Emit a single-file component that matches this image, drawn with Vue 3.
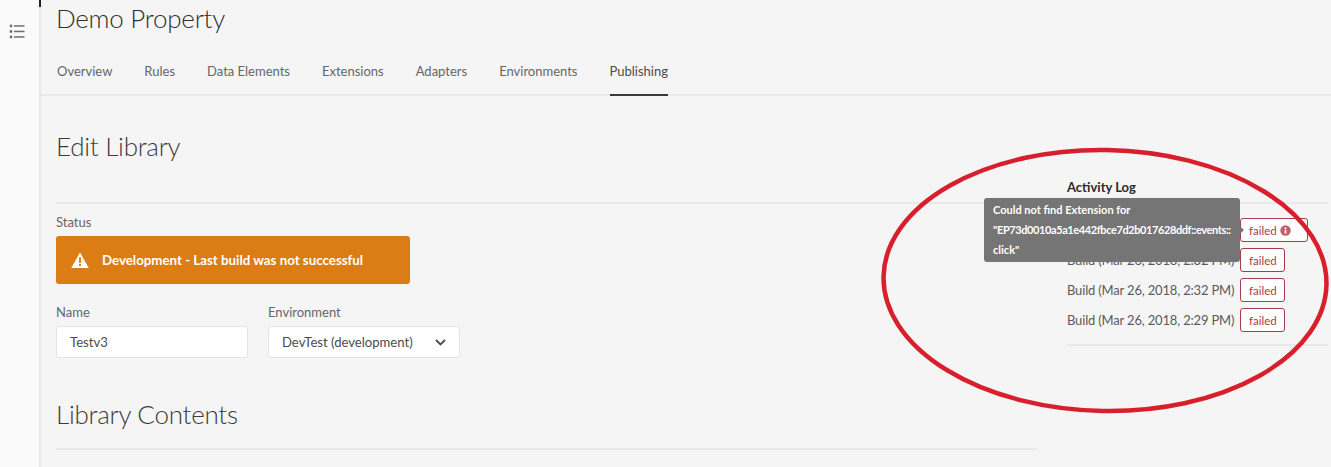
<script setup>
const tabs = ['Overview', 'Rules', 'Data Elements', 'Extensions', 'Adapters', 'Environments', 'Publishing']
const builds = [
  { label: 'Build (Mar 26, 2018, 2:32 PM)' },
  { label: 'Build (Mar 26, 2018, 2:32 PM)' },
  { label: 'Build (Mar 26, 2018, 2:32 PM)' },
  { label: 'Build (Mar 26, 2018, 2:29 PM)' },
]
</script>

<template>
  <div class="page">
    <aside class="rail">
      <svg class="rail-icon" width="16" height="15" viewBox="0 0 16 15">
        <circle cx="2" cy="2" r="1.4" />
        <circle cx="2" cy="7.5" r="1.4" />
        <circle cx="2" cy="13" r="1.4" />
        <rect x="5" y="1.2" width="10.5" height="1.5" />
        <rect x="5" y="6.7" width="10.5" height="1.5" />
        <rect x="5" y="12.2" width="10.5" height="1.5" />
      </svg>
    </aside>
    <main class="main">
      <span class="tick"></span>
      <h1 class="title">Demo Property</h1>
      <nav class="tabs">
        <a v-for="(t, i) in tabs" :key="t" class="tab" :class="{ active: i === tabs.length - 1 }">{{ t }}</a>
      </nav>
      <div class="body">
        <h2 class="heading">Edit Library</h2>
        <div class="columns">
          <section class="left">
            <div class="rule-space"></div>
            <label class="lbl status-lbl">Status</label>
            <div class="alert">
              <svg width="18" height="16" viewBox="0 0 18 16">
                <path d="M9 0.5 L17.8 16 H0.2 Z" fill="#fff" />
                <rect x="8" y="5.3" width="2" height="5.6" fill="#dc7c14" />
                <rect x="8" y="12" width="2" height="2" fill="#dc7c14" />
              </svg>
              <span>Development - Last build was not successful</span>
            </div>
            <div class="fields">
              <div class="field">
                <label class="lbl">Name</label>
                <div class="box">Testv3</div>
              </div>
              <div class="field">
                <label class="lbl">Environment</label>
                <div class="box select">
                  <span>DevTest (development)</span>
                  <svg width="11" height="7" viewBox="0 0 11 7"><path d="M1 1 L5.5 5.5 L10 1" fill="none" stroke="#4b4b4b" stroke-width="1.8" /></svg>
                </div>
              </div>
            </div>
            <h2 class="heading contents">Library Contents</h2>
          </section>
          <section class="right">
            <h3 class="log-title">Activity Log</h3>
            <ul class="log">
              <li v-for="(b, i) in builds" :key="i" class="log-row">
                <span class="log-label">{{ b.label }}</span>
                <span class="badge" :class="{ wide: i === 0 }">
                  failed
                  <svg v-if="i === 0" width="11" height="11" viewBox="0 0 11 11">
                    <circle cx="5.5" cy="5.5" r="5.2" fill="#c0606a" />
                    <rect x="4.7" y="4.7" width="1.6" height="3.8" fill="#fff" />
                    <rect x="4.7" y="2.4" width="1.6" height="1.6" fill="#fff" />
                  </svg>
                </span>
              </li>
            </ul>
            <div class="tooltip">
              <span class="tip-line">Could not find Extension for</span>
              <span class="tip-line tight">"EP73d0010a5a1e442fbce7d2b017628ddf::events::</span>
              <span class="tip-line">click"</span>
            </div>
          </section>
        </div>
      </div>
    </main>
    <svg class="ring" width="460" height="280" viewBox="0 0 460 280">
      <ellipse cx="230" cy="140.5" rx="221.5" ry="130.5" transform="rotate(1 230 140.5)" />
    </svg>
  </div>
</template>

<style>
html, body { margin: 0; background: #f5f5f5; }
</style>

<style scoped>
.page {
  position: relative;
  display: flex;
  width: 1331px;
  height: 467px;
  overflow: hidden;
  background: #f5f5f5;
  font-family: Lato, "Open Sans", sans-serif;
  color: #4b4b4b;
}
.rail {
  flex: none;
  width: 39px;
  height: 100%;
  background: #fafafa;
  border-right: 2px solid #e8e8e8;
  display: flex;
  justify-content: center;
  align-items: flex-start;
}
.rail-icon { margin-top: 24px; margin-right: 5px; fill: #6e6e6e; }
.main {
  position: relative;
  flex: 1;
  min-width: 0;
}
.tick {
  position: absolute;
  left: -2px;
  top: 0;
  width: 2px;
  height: 7px;
  background: #222;
}
.title {
  margin: 0;
  padding: 1px 0 0 15px;
  height: 39px;
  font-size: 26px;
  letter-spacing: -0.26px;
  line-height: 34px;
  font-weight: 300;
  color: #2f2f2f;
}
.tabs {
  display: flex;
  gap: 32px;
  height: 54px;
  padding-left: 16px;
  border-bottom: 2px solid #eaeaea;
}
.tab {
  height: 56px;
  box-sizing: border-box;
  padding-top: 22px;
  font-size: 13px;
  line-height: 18px;
  color: #666;
}
.tab.active {
  color: #4b4b4b;
  border-bottom: 2px solid #3a3a3a;
}
.body { padding: 32px 3px 0 15px; }
.heading {
  margin: 0;
  font-size: 26px;
  letter-spacing: -0.26px;
  line-height: 36px;
  font-weight: 300;
  color: #3a3a3a;
}
.columns {
  display: flex;
  gap: 30px;
  margin-top: 20px;
}
.left { width: 981px; flex: none; }
.rule-space { height: 18px; border-bottom: 2px solid #e8e8e8; }
.lbl {
  display: block;
  font-size: 13px;
  line-height: 18px;
  color: #666;
}
.status-lbl { margin-top: 9px; }
.alert {
  display: flex;
  align-items: center;
  gap: 13px;
  width: 354px;
  height: 48px;
  margin-top: 5px;
  box-sizing: border-box;
  padding-left: 15px;
  border-radius: 3px;
  background: #dc7c14;
  color: #fff;
  font-size: 13.3px;
  font-weight: 700;
}
.fields {
  display: flex;
  gap: 20px;
  margin-top: 19px;
}
.field { width: 192px; }
.box {
  display: flex;
  align-items: center;
  justify-content: space-between;
  width: 192px;
  height: 32px;
  margin-top: 5px;
  box-sizing: border-box;
  padding: 0 13px;
  border: 1px solid #e4e4e4;
  border-radius: 3px;
  background: #fff;
  font-size: 13.1px;
  color: #4b4b4b;
}
.contents {
  margin-top: 38px;
  padding-bottom: 16px;
  border-bottom: 2px solid #e8e8e8;
}
.right { position: relative; width: 261px; flex: none; margin-top: -7px; }
.log-title {
  margin: 0;
  height: 20px;
  padding-bottom: 5px;
  border-bottom: 2px solid #e8e8e8;
  font-size: 13px;
  line-height: 20px;
  font-weight: 700;
  color: #2c2c2c;
}
.log {
  list-style: none;
  margin: 0;
  padding: 11px 0 9px;
  border-bottom: 2px solid #e8e8e8;
}
.log-row {
  display: flex;
  align-items: center;
  gap: 8px;
  height: 30px;
}
.log-label {
  width: 165px;
  white-space: nowrap;
  font-size: 13px;
  letter-spacing: -0.17px;
  color: #5a5a5a;
}
.badge {
  display: flex;
  align-items: center;
  gap: 3px;
  width: 45px;
  height: 24px;
  box-sizing: border-box;
  padding-left: 8px;
  border: 1px solid #a83c48;
  border-radius: 3px;
  background: #fff;
  font-size: 11.5px;
  color: #a83c48;
}
.badge.wide { width: 68px; }
.tooltip {
  position: absolute;
  top: 21px;
  left: -83px;
  width: 256px;
  height: 64px;
  box-sizing: border-box;
  padding: 2px 9px;
  border-radius: 3px;
  background: #757575;
  color: #fff;
  font-size: 11px;
  font-weight: 700;
  line-height: 20px;
}
.tip-line { display: block; white-space: nowrap; }
.tip-line.tight { letter-spacing: -0.4px; }
.tooltip::after {
  content: "";
  position: absolute;
  left: 100%;
  top: 28px;
  border: 4px solid transparent;
  border-left-color: #757575;
}
.ring {
  position: absolute;
  left: 875px;
  top: 140px;
  pointer-events: none;
}
.ring ellipse {
  fill: none;
  stroke: #d8202d;
  stroke-width: 4.5;
}
</style>
